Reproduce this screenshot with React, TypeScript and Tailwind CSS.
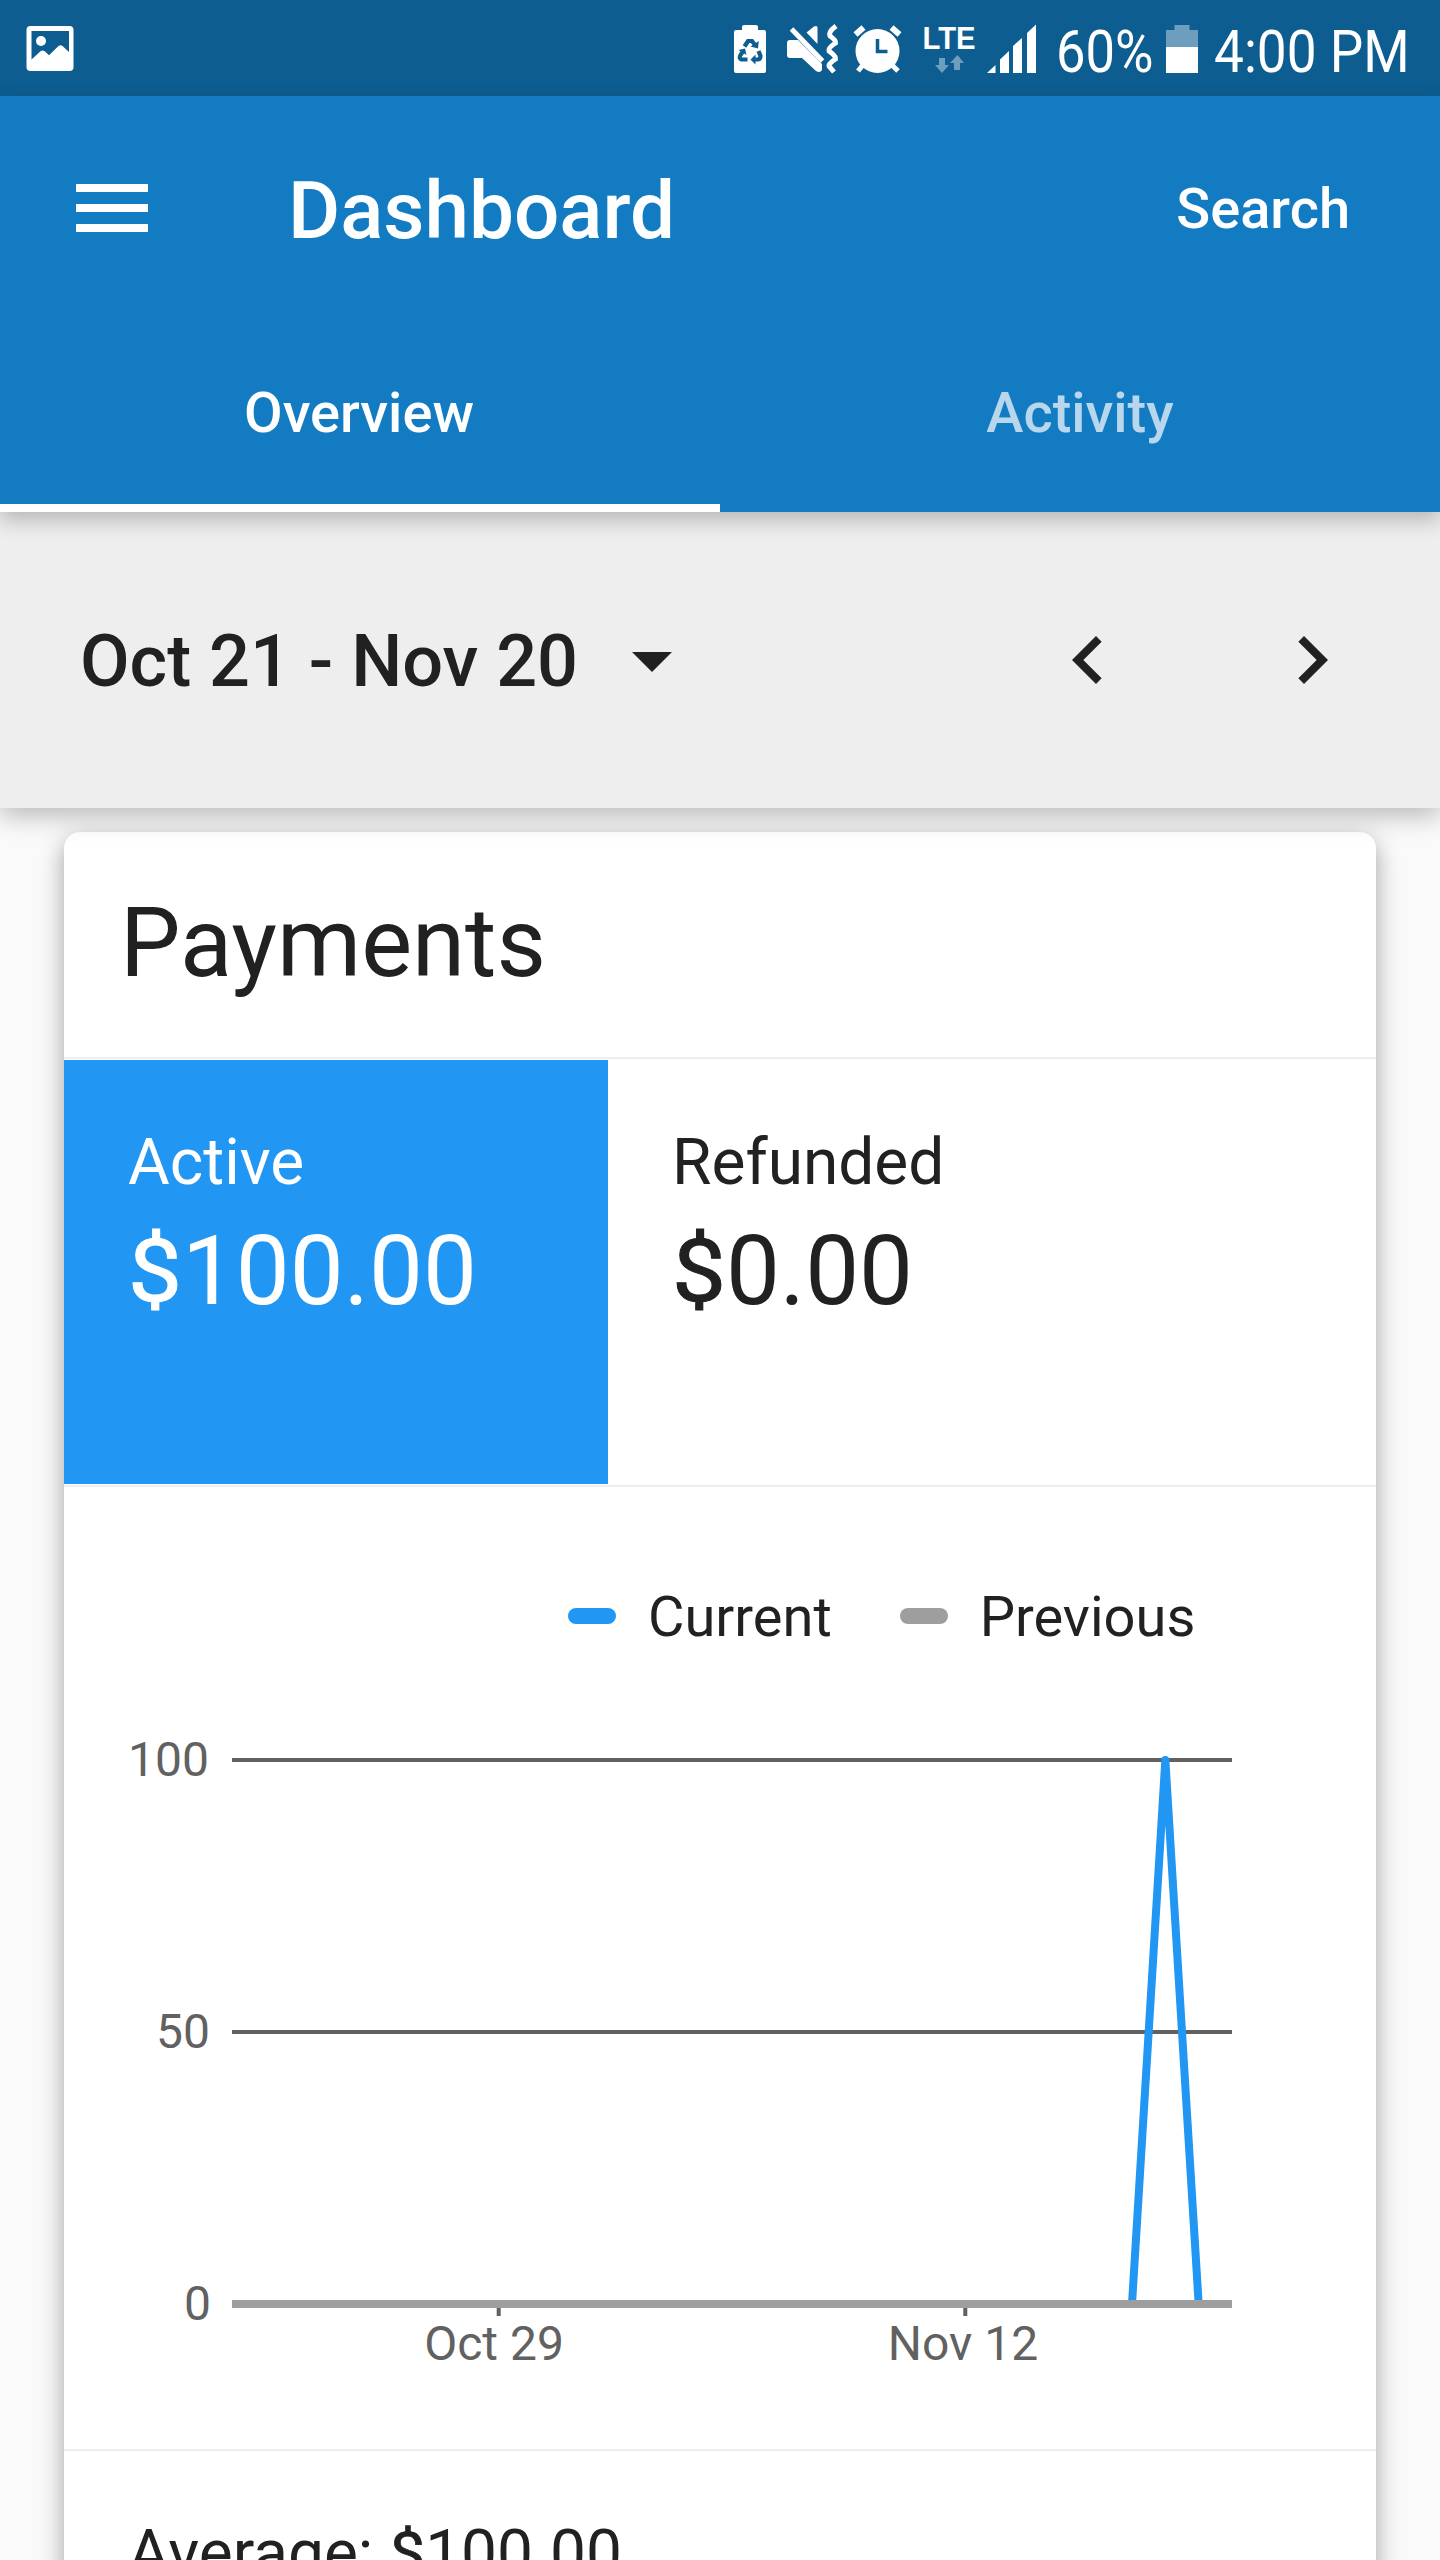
import type { ReactNode } from "react";

const dayStep = 1000 / 30;
const spike = [27, 28, 29].map((day) => day * dayStep);

function StatusBar() {
  return (
    <div className="flex h-[96px] items-start bg-[#0e5d90] text-white">
      <svg className="ml-[24px] mt-[24px] h-[52px] w-[52px]" viewBox="24 24 52 52">
        <rect x="26.5" y="26" width="47" height="45" rx="4" fill="#fff" />
        <path d="M31.5 31H69V52L62.5 46Q60.5 44.500 58.500 46L49 55.300L44.800 51.300Q42.500 49.700 40.500 51.300L31.500 59.500Z" fill="#0e5d90" />
        <circle cx="41" cy="41" r="5" fill="#fff" />
      </svg>
      <svg className="ml-[654px] h-[96px] w-[310px]" viewBox="730 0 310 96" fill="#fff">
        <path d="M742 30V27Q742 25 744 25H756Q758 25 758 27V30H764Q766 30 766 32V71Q766 73 764 73H736Q734 73 734 71V32Q734 30 736 30Z" />
        <g fill="none" stroke="#0e5d90" strokeWidth="4.200">
          <path d="M744.500 46.500L748 41H752L755 45" />
          <path d="M758.500 51L760.500 56Q760.500 59.500 757.500 59.500H753.500" />
          <path d="M747.500 59.500H741.500Q738.500 58.500 740.500 55L742.500 52" />
        </g>
        <path fill="#0e5d90" d="M750.500 46.500L758 48.500L758.800 41ZM755.500 54.500L750.500 59.500L755.500 64.500ZM738.500 50L745 48.500L746.500 55Z" />
        <path d="M790 40H798L822 64V70Q820 73.500 816 71L802 58H790Q787 58 787 55V43Q787 40 790 40Z" />
        <path d="M806.500 32.500L814 26.500Q817.500 25 817.500 28V44Z" />
        <path d="M794.500 26.500L825.500 61" stroke="#0e5d90" strokeWidth="4" />
        <path d="M791.500 29L822.500 61" stroke="#fff" strokeWidth="5" />
        <path d="M836 26Q828 32 830 36Q836 40 835.500 43Q828 48 829 51Q836 56 835.500 59Q828 64 829 66L834 72" fill="none" stroke="#fff" strokeWidth="5" />
        <path d="M855.500 34.500L863.500 27.500M899.500 34.500L891.500 27.500" fill="none" stroke="#fff" strokeWidth="6" />
        <path d="M863 65L858 71M892 65L898 71" fill="none" stroke="#fff" strokeWidth="5" />
        <circle cx="877.500" cy="51" r="22" />
        <path d="M877.500 39V51.500H887.500" fill="none" stroke="#0e5d90" strokeWidth="3.500" />
        <text x="922.500" y="49" fontFamily="Liberation Sans" fontWeight="700" fontSize="31" textLength="53" lengthAdjust="spacingAndGlyphs">LTE</text>
        <path fill="#6e9ebd" d="M939 58H945V65H949L942 73L935 65H939ZM954 70V63H950L957.500 55L964 63H960V70Z" />
        <path d="M987 73L995.500 65V73ZM1000 73V59.500L1009 51V73ZM1013 73V46L1022 38V73ZM1027 73V33L1036 24.500V73Z" />
      </svg>
      <div className="mt-[17px] h-[70px] w-[110px] pl-[16px] text-[60px] leading-[70px]">
        <span className="inline-block origin-left scale-x-[0.875] whitespace-nowrap">60%</span>
      </div>
      <svg className="ml-[15px] mt-[24px] h-[50px] w-[34px]" viewBox="1165 24 34 50">
        <path d="M1166 30H1174.500V25H1189.500V30H1198V48H1166Z" fill="#6e9ebd" />
        <path d="M1166 47H1198V73H1166Z" fill="#fff" />
      </svg>
      <div className="ml-[15px] mt-[17px] h-[70px] text-[60px] leading-[70px]">
        <span className="inline-block origin-left scale-x-[0.886] whitespace-nowrap">4:00 PM</span>
      </div>
    </div>
  );
}

function Header() {
  return (
    <header className="relative z-20 h-[416px] bg-[#127bc2] text-white shadow-[0_8px_20px_rgba(0,0,0,0.24)]">
      <div className="flex h-[224px] items-center pl-[76px] pr-[90px]">
        <div className="flex w-[72px] flex-col gap-[12px]">
          <div className="h-[8px] bg-white" />
          <div className="h-[8px] bg-white" />
          <div className="h-[8px] bg-white" />
        </div>
        <h1 className="ml-[140px] pt-[5px] text-[80px] font-medium leading-[96px]">Dashboard</h1>
        <div className="ml-auto pt-[2px] text-[56px] font-medium leading-[64px]">Search</div>
      </div>
      <div className="grid h-[192px] grid-cols-2 text-center text-[56px] font-medium leading-[187px]">
        <div className="h-[192px] border-b-[8px] border-white pr-[2px]">Overview</div>
        <div className="text-white/70">Activity</div>
      </div>
    </header>
  );
}

function DateBar() {
  return (
    <div className="relative z-10 flex h-[296px] items-center bg-[#eeeeee] pl-[80px] pr-[80px] text-[#212121] shadow-[0_8px_24px_rgba(0,0,0,0.26)]">
      <div className="w-[500px] pt-[3px] text-[72px] font-medium leading-[84px]">Oct 21 - Nov 20</div>
      <svg className="ml-[24px] h-[96px] w-[96px]" viewBox="0 0 24 24" fill="currentColor">
        <path d="M7 10l5 5 5-5z" />
      </svg>
      <svg className="ml-auto h-[96px] w-[96px]" viewBox="0 0 24 24" fill="currentColor">
        <path d="M15.410 7.410L14 6l-6 6 6 6 1.410-1.410L10.830 12z" />
      </svg>
      <svg className="ml-[128px] h-[96px] w-[96px]" viewBox="0 0 24 24" fill="currentColor">
        <path d="M10 6L8.590 7.410 13.170 12l-4.580 4.590L10 18l6-6z" />
      </svg>
    </div>
  );
}

function Dollars({ amount }: { amount: string }) {
  return (
    <>
      <span className="inline-block w-[0.5615em] origin-[50%_54%] scale-y-[0.91] [-webkit-text-stroke:0.012em_currentColor]">$</span>
      {amount}
    </>
  );
}

function Stat({ label, amount, active }: { label: string; amount: string; active?: boolean }) {
  return (
    <div className={active ? "h-[424px] w-[544px] bg-[#2196f3] pl-[64px] pt-[65px] text-white" : "h-[424px] pl-[64px] pt-[65px]"}>
      <div className="text-[64px] leading-[76px]">{label}</div>
      <div className="mt-[13px] text-[96px] leading-[114px]">
        <Dollars amount={amount} />
      </div>
    </div>
  );
}

function LegendItem({ swatch, children }: { swatch: ReactNode; children: ReactNode }) {
  return (
    <div className="flex items-center">
      {swatch}
      <span className="ml-[32px]">{children}</span>
    </div>
  );
}

function Chart() {
  return (
    <svg className="block h-[700px] w-[1312px]" viewBox="64 1700 1312 700" fontFamily="Roboto" fontSize="48" fill="#616161">
      <path d="M232 1760H1232M232 2032H1232" stroke="#616161" strokeWidth="4" />
      <path d="M498.700 2308V2316M965.300 2308V2316" stroke="#616161" strokeWidth="4" />
      <polyline
        points={`${232 + spike[0]},2304 ${232 + spike[1]},1760 ${232 + spike[2]},2304`}
        fill="none"
        stroke="#2196f3"
        strokeWidth="8"
        strokeLinejoin="round"
      />
      <path d="M232 2304H1232" stroke="#9e9e9e" strokeWidth="8" />
      <g textAnchor="end">
        <text x="209" y="1776">100</text>
        <text x="210" y="2048">50</text>
        <text x="211" y="2320">0</text>
      </g>
      <g textAnchor="middle">
        <text x="494" y="2360">Oct 29</text>
        <text x="963" y="2360">Nov 12</text>
      </g>
    </svg>
  );
}

export default function App() {
  return (
    <div className="h-[2560px] w-[1440px] overflow-hidden bg-[#fafafa] font-['Roboto',sans-serif]">
      <StatusBar />
      <Header />
      <DateBar />
      <main className="mx-[64px] mt-[24px] h-[1900px] rounded-[16px] bg-white text-[#212121] shadow-[0_8px_24px_rgba(0,0,0,0.36)]">
        <h2 className="h-[227px] border-b-2 border-[#eeeeee] pl-[56px] text-[96px] leading-[223px]">Payments</h2>
        <div className="flex border-b-2 border-[#eeeeee] py-px">
          <Stat label="Active" amount="100.00" active />
          <Stat label="Refunded" amount="0.00" />
        </div>
        <div className="flex h-[213px] items-start gap-[68px] pl-[504px] pt-[97px] text-[56px] leading-[66px]">
          <LegendItem swatch={<div className="-mt-[2px] h-[16px] w-[48px] rounded-[8px] bg-[#2196f3]" />}>Current</LegendItem>
          <LegendItem swatch={<div className="-mt-[2px] h-[16px] w-[48px] rounded-[8px] bg-[#9e9e9e]" />}>Previous</LegendItem>
        </div>
        <Chart />
        <div className="mt-[49px] border-t-2 border-[#eeeeee] pl-[64px] pt-[65px] text-[64px] leading-[76px]">
          Average: <Dollars amount="100.00" />
        </div>
      </main>
    </div>
  );
}
